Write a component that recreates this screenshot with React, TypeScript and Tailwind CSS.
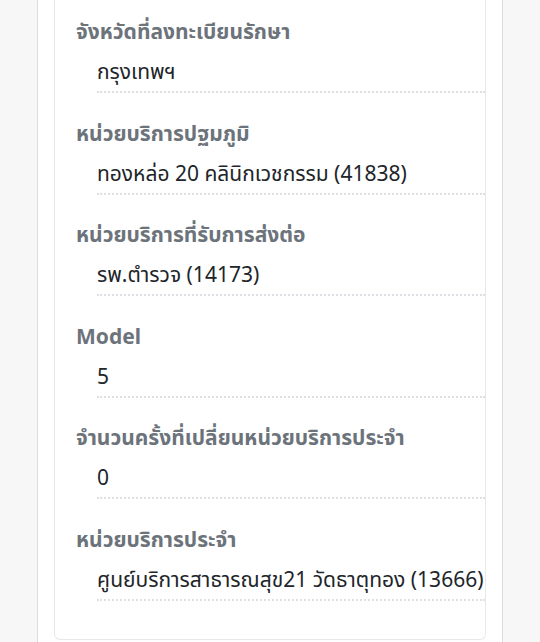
const rows: { label: string; value: string }[] = [
	{ label: "จังหวัดที่ลงทะเบียนรักษา", value: "กรุงเทพฯ" },
	{ label: "หน่วยบริการปฐมภูมิ", value: "ทองหล่อ 20 คลินิกเวชกรรม (41838)" },
	{ label: "หน่วยบริการที่รับการส่งต่อ", value: "รพ.ตำรวจ (14173)" },
	{ label: "Model", value: "5" },
	{ label: "จำนวนครั้งที่เปลี่ยนหน่วยบริการประจำ", value: "0" },
	{ label: "หน่วยบริการประจำ", value: "ศูนย์บริการสาธารณสุข21 วัดธาตุทอง (13666)" },
];

export default function App() {
	return (
		<div
			className="min-h-[642px] w-[540px] overflow-hidden bg-[#f7f7f7] pl-[37px] pr-[37px]"
			style={{ fontFamily: '"Noto Sans", "Noto Sans Thai", sans-serif' }}
		>
			<div className="min-h-[660px] border-x border-[#dcdcdc] bg-white px-[16px] pb-[30px]">
				<div className="rounded-b-[6px] border-x border-b border-[#e8e8e8] pl-[21px] pt-[17px] pb-[38px]">
					<div className="flex flex-col gap-[25.5px]">
						{rows.map((r) => (
							<div key={r.label}>
								<div className="text-[21px] leading-[28px] font-bold text-[#6c737b]">
									{r.label}
								</div>
								<div className="ml-[21px] mt-[12px] border-b-2 border-dotted border-[#dcdfe3] pb-[6px] text-[21px] leading-[28px] text-[#212529]">
									{r.value}
								</div>
							</div>
						))}
					</div>
				</div>
			</div>
		</div>
	);
}
